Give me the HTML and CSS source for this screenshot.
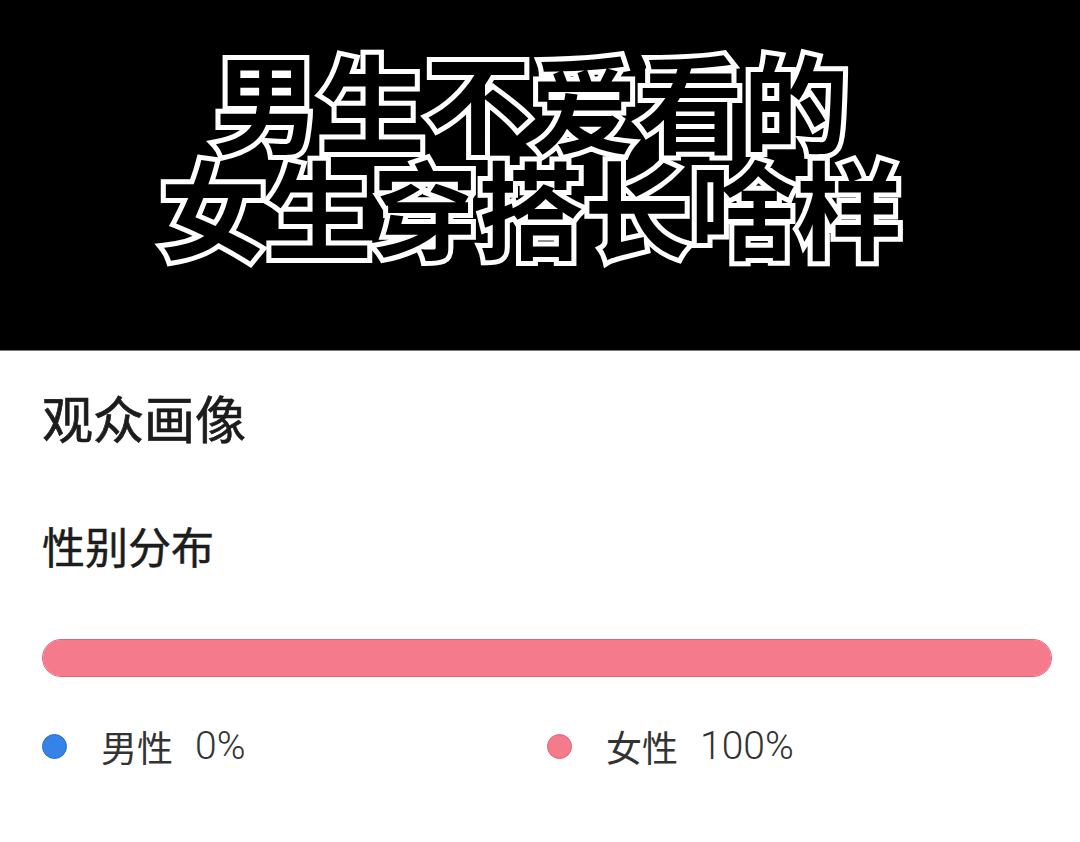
FILE: index.html
```html
<!DOCTYPE html>
<html lang="zh-CN">
<head>
  <meta charset="UTF-8" />
  <meta name="viewport" content="width=device-width, initial-scale=1.0" />
  <title>观众画像</title>
  <link rel="stylesheet" href="styles.css">
</head>
<body>
  <header class="cover">
    <h1 class="cover-title">男生不爱看的<br>女生穿搭长啥样</h1>
  </header>

  <main class="audience">
    <h2 class="audience-title">观众画像</h2>
    <h3 class="section-title">性别分布</h3>

    <div class="gender-bar">
      <div class="gender-bar-male" style="width: 0%"></div>
      <div class="gender-bar-female" style="width: 100%"></div>
    </div>

    <ul class="legend">
      <li class="legend-item">
        <span class="dot dot-male"></span>
        <span class="legend-label">男性</span>
        <span class="legend-value">0%</span>
      </li>
      <li class="legend-item">
        <span class="dot dot-female"></span>
        <span class="legend-label">女性</span>
        <span class="legend-value">100%</span>
      </li>
    </ul>
  </main>
</body>
</html>
```

FILE: styles.css
```css
:root {
  --pink: rgb(245, 123, 140);
  --pink-edge: rgb(222, 100, 118);
  --blue: rgb(53, 130, 232);
  --ink: rgb(28, 28, 28);
  --text: rgb(51, 51, 51);
}

html, body {
  margin: 0;
  padding: 0;
  background: white;
  font-family: "Noto Sans CJK SC", "Noto Sans", sans-serif;
  color: var(--ink);
}

/* black cover with outlined title */
.cover {
  height: 351px;
  background: black;
  box-sizing: border-box;
  padding: 46px 18px 0 0;
  border-bottom: 1px solid rgb(120, 120, 120);
}

.cover-title {
  margin: 0;
  text-align: center;
  font-size: 106px;
  line-height: 106px;
  font-weight: 700;
  color: black;
  -webkit-text-stroke: 10px white;
  paint-order: stroke fill;
}

.audience {
  padding: 31px 28px 40px 42px;
}

.audience-title {
  margin: 0;
  font-size: 51px;
  line-height: 70px;
  font-weight: 400;
  -webkit-text-stroke: 0.7px var(--ink);
}

.section-title {
  margin: 63px 0 0;
  font-size: 43px;
  line-height: 60px;
  font-weight: 400;
  -webkit-text-stroke: 0.5px var(--ink);
}

.gender-bar {
  display: flex;
  margin-top: 64px;
  height: 38px;
  border-radius: 19px;
  overflow: hidden;
  box-sizing: border-box;
  border: 1px solid var(--pink-edge);
  background: var(--pink);
}

.gender-bar-male {
  background: var(--blue);
}

.gender-bar-female {
  background: var(--pink);
}

.legend {
  list-style: none;
  margin: 44px 0 0;
  padding: 0;
  display: grid;
  grid-template-columns: 1fr 1fr;
}

.legend-item {
  display: flex;
  align-items: center;
  font-size: 36px;
  line-height: 50px;
  color: var(--text);
}

.dot {
  width: 25px;
  height: 25px;
  border-radius: 50%;
  box-sizing: border-box;
  margin-right: 34px;
}

.dot-male {
  background: var(--blue);
  border: 1px solid rgb(40, 110, 205);
}

.dot-female {
  background: var(--pink);
  border: 1px solid var(--pink-edge);
}

.legend-value {
  margin-left: 22px;
  font-family: Roboto, "Noto Sans", sans-serif;
  font-size: 39px;
  font-weight: 300;
}
```
